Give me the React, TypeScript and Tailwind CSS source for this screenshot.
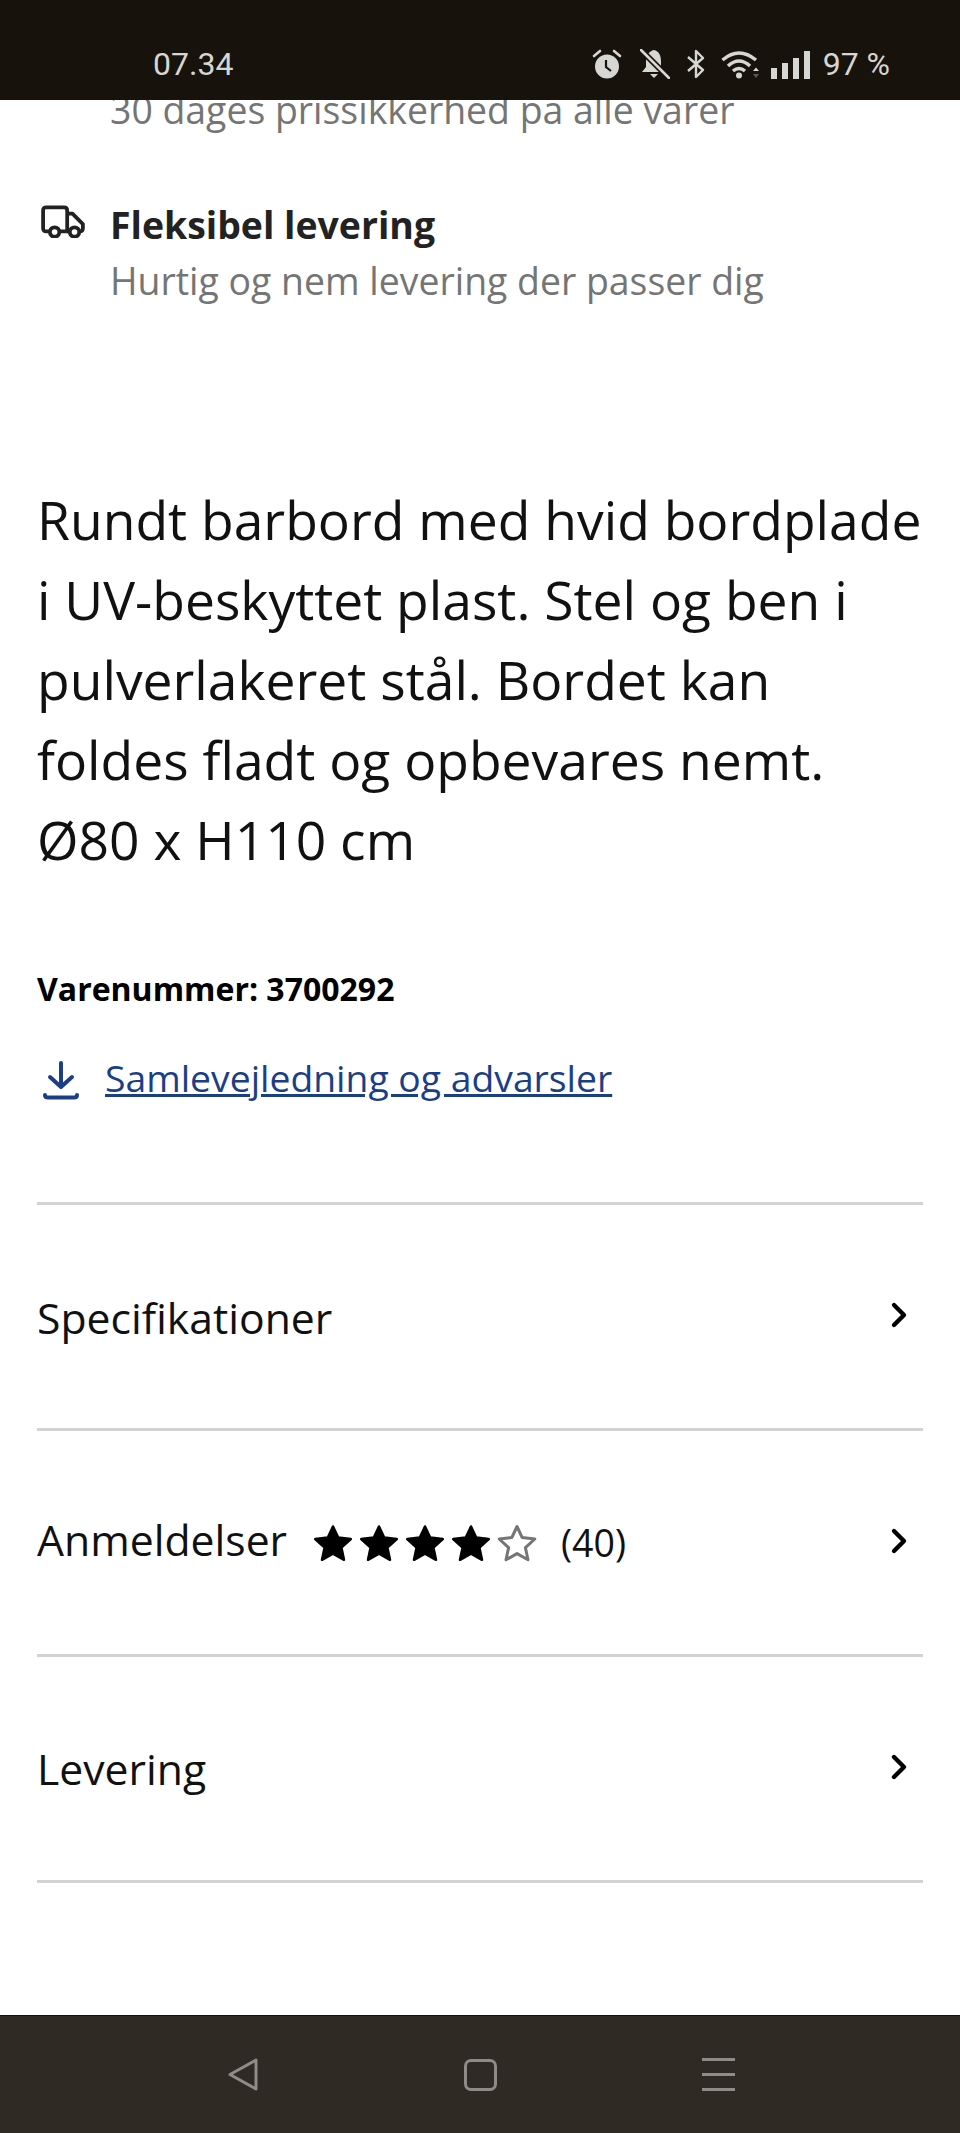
import { ChevronRight } from 'lucide-react';

function Star({ filled }: { filled: boolean }) {
    return (
        <svg width="40" height="38" viewBox="0 0 40 38">
            <path
                d="M20 2.5 L25.2 13.6 L37.8 15 L28.4 23.6 L31 35.8 L20 29.6 L9 35.8 L11.6 23.6 L2.2 15 L14.8 13.6 Z"
                fill={filled ? '#000' : 'none'}
                stroke={filled ? '#000' : '#757575'}
                strokeWidth={filled ? 2.5 : 3}
                strokeLinejoin="round"
            />
        </svg>
    );
}

function StatusIcons() {
    return (
        <div className="flex items-center">
            <svg width="30" height="30" viewBox="0 0 30 30" fill="#d6d6d3">
                <circle cx="15" cy="17.5" r="12" />
                <path d="M2 7 L8 2 M28 7 L22 2" stroke="#d6d6d3" strokeWidth="2.6" strokeLinecap="round" />
                <path d="M14 11 V18 L19 22" stroke="#17130c" strokeWidth="2.2" fill="none" />
            </svg>
            <svg className="ml-[18px]" width="30" height="30" viewBox="0 0 30 30" fill="#d6d6d3">
                <path d="M14 1 C9 2 6 7 6 12 V18 L2 23 H25 L21 18 V12 C21 7 19 2 14 1 Z" />
                <path d="M10 25 H18 L14 29 Z" />
                <path d="M1 1 L29 29" stroke="#17130c" strokeWidth="6" />
                <path d="M1 1 L29 29" stroke="#d6d6d3" strokeWidth="2.6" strokeLinecap="round" />
            </svg>
            <svg className="ml-[16px]" width="20" height="30" viewBox="0 0 20 30" fill="none" stroke="#d6d6d3" strokeWidth="2.4">
                <path d="M2 8 L17 21 L10 28 V2 L17 9 L2 22" strokeLinejoin="round" />
            </svg>
            <svg className="ml-[15px]" width="40" height="30" viewBox="0 0 40 30" fill="none" stroke="#d6d6d3" strokeWidth="3.5">
                <path d="M1.5 11 Q18 -3 35 11" />
                <path d="M7 17 Q18 7 29 17" />
                <path d="M12 22 Q18 17 24 22" />
                <circle cx="18" cy="26.5" r="3" fill="#d6d6d3" stroke="none" />
                <path d="M32 22 L35 18.5 L38 22 Z" fill="#d6d6d3" stroke="none" />
                <path d="M32 25 L35 29 L38 25 Z" fill="#5a5a56" stroke="none" />
            </svg>
            <div className="ml-[10px] flex items-end gap-[5px] h-[30px]">
                <div className="w-[6px] h-[11px] bg-[#d6d6d3]" />
                <div className="w-[6px] h-[16px] bg-[#d6d6d3]" />
                <div className="w-[6px] h-[21px] bg-[#d6d6d3]" />
                <div className="w-[6px] h-[28px] bg-[#d6d6d3]" />
            </div>
            <span className="ml-[13px] text-[32px] leading-none text-[#d6d6d3] font-['Roboto',sans-serif]">97 %</span>
        </div>
    );
}

function AccordionRow({ title, titleClass, children }: { title: string; titleClass?: string; children?: React.ReactNode }) {
    return (
        <button className="w-full h-[226px] flex items-center justify-between border-b-[3px] border-[#d3d3d3] pr-[4px] text-left">
            <div className="flex items-center">
                <span className={`text-[42.7px] leading-none text-[#111] ${titleClass ?? ''}`}>{title}</span>
                {children}
            </div>
            <ChevronRight className="text-black -mt-[3px]" size={40} strokeWidth={2.6} />
        </button>
    );
}

export default function App() {
    return (
        <div className="w-[960px] h-[2133px] flex flex-col bg-white overflow-hidden font-['Open_Sans',sans-serif]">
            <header className="h-[100px] shrink-0 bg-[#17130c] flex items-center justify-between pl-[153px] pr-[70px] pt-[28px] relative z-10">
                <span className="text-[32px] leading-none text-[#d6d6d3] font-['Roboto',sans-serif]">07.34</span>
                <StatusIcons />
            </header>

            <main className="flex-1 px-[37px]">
                <div className="pl-[73px] -mt-[15px]">
                    <p className="text-[37.4px] leading-[50px] text-[#757575]">30 dages prissikkerhed på alle varer</p>
                </div>

                <div className="flex mt-[66px]">
                    <svg className="w-[44px] h-[33px] ml-[4px] mt-[4px]" viewBox="0 0 42 31" fill="none" stroke="#222" strokeWidth="3.6" strokeLinejoin="round">
                        <path d="M8 25 H5 Q2 25 2 22 V5 Q2 2 5 2 H22 Q25 2 25 5 V25 H18" />
                        <path d="M25 8 H30 L40 18 V22 Q40 25 37 25 M27 25 H25" />
                        <circle cx="13" cy="25.5" r="4.5" />
                        <circle cx="32" cy="25.5" r="4.5" />
                    </svg>
                    <div className="ml-[25px] -mt-[4px]">
                        <p className="text-[37.4px] leading-[56px] font-bold text-[#222]">Fleksibel levering</p>
                        <p className="text-[37.4px] leading-[56px] text-[#757575]">Hurtig og nem levering der passer dig</p>
                    </div>
                </div>

                <p className="mt-[171px] text-[53.4px] leading-[80px] text-[#111]">
                    Rundt barbord med hvid bordplade i UV-beskyttet plast. Stel og ben i pulverlakeret stål. Bordet kan foldes fladt og opbevares nemt. Ø80 x H110 cm
                </p>

                <p className="mt-[87px] text-[32px] leading-[44px] font-bold text-black">Varenummer: 3700292</p>

                <a className="mt-[42px] flex items-center text-[#1b3f87]">
                    <svg className="ml-[6px] mt-[3px]" width="36" height="40" viewBox="0 0 36 40" fill="none" stroke="currentColor" strokeWidth="4" strokeLinecap="round" strokeLinejoin="round">
                        <path d="M18 3 V27 M7 17 L18 27 L29 17" />
                        <path d="M2 35 Q2 37.5 5 37.5 H31 Q34 37.5 34 35" />
                    </svg>
                    <span className="ml-[26px] text-[37.3px] leading-[50px] underline">Samlevejledning og advarsler</span>
                </a>

                <div className="mt-[99px] border-b-[3px] border-[#d3d3d3]" />
                <AccordionRow title="Specifikationer" titleClass="mt-[4px]" />
                <AccordionRow title="Anmeldelser" titleClass="-mt-[5px]">
                    <div className="ml-[26px] flex items-center gap-[6px]">
                        <Star filled />
                        <Star filled />
                        <Star filled />
                        <Star filled />
                        <Star filled={false} />
                    </div>
                    <span className="ml-[24px] text-[37.5px] leading-none text-[#111]">(40)</span>
                </AccordionRow>
                <AccordionRow title="Levering" titleClass="mt-[2px]" />
            </main>

            <footer className="h-[118px] shrink-0 bg-[#2f2a23] border-t border-[#111] flex items-center justify-between pl-[228px] pr-[225px]">
                <svg width="30" height="33" viewBox="0 0 30 33" fill="none" stroke="#8f8b86" strokeWidth="3" strokeLinejoin="round">
                    <path d="M2 16.5 L28 2 V31 Z" />
                </svg>
                <div className="w-[33px] h-[32px] rounded-[7px] border-[3px] border-[#8f8b86]" />
                <div className="flex flex-col gap-[12px]">
                    <div className="w-[33px] h-[3px] bg-[#8f8b86]" />
                    <div className="w-[33px] h-[3px] bg-[#8f8b86]" />
                    <div className="w-[33px] h-[3px] bg-[#8f8b86]" />
                </div>
            </footer>
        </div>
    );
}
